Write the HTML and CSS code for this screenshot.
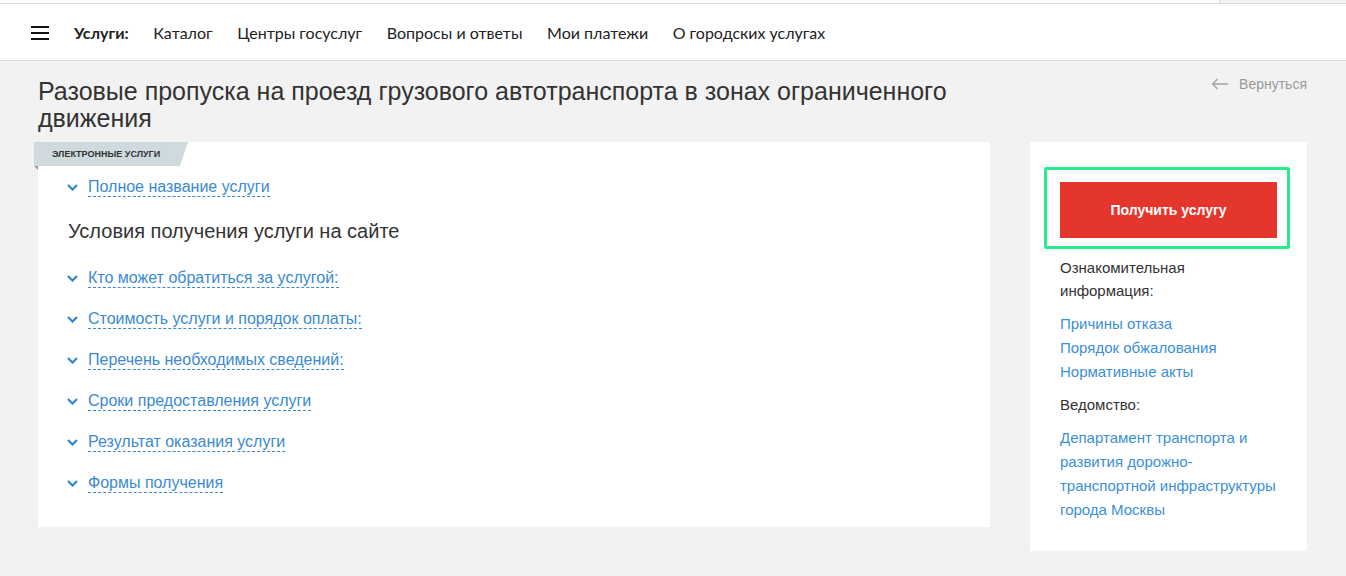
FILE: index.html
```html
<!DOCTYPE html>
<html lang="ru">
<head>
  <meta charset="utf-8">
  <title>Разовые пропуска на проезд грузового автотранспорта</title>
  <link rel="stylesheet" href="styles.css">
</head>
<body>
  <div class="topline">
    <div class="topline-side"></div>
  </div>

  <header class="header">
    <div class="burger">
      <span></span><span></span><span></span>
    </div>
    <nav class="nav">
      <b class="nav-title">Услуги:</b>
      <a href="#">Каталог</a>
      <a href="#">Центры госуслуг</a>
      <a href="#">Вопросы и ответы</a>
      <a href="#">Мои платежи</a>
      <a href="#">О городских услугах</a>
    </nav>
  </header>

  <main class="page">
    <div class="title-row">
      <h1>Разовые пропуска на проезд грузового автотранспорта в зонах ограниченного движения</h1>
      <a class="back" href="#">
        <svg width="18" height="12" viewBox="0 0 18 12"><path d="M17 6H1.5M6.5 1L1.5 6l5 5" fill="none" stroke="#a3a3a3" stroke-width="1.3"/></svg>
        Вернуться
      </a>
    </div>

    <div class="columns">
      <section class="card">
        <div class="tag"><span class="tag-label">Электронные услуги</span></div>
        <div class="card-body">
          <a class="toggle" href="#">
            <svg class="chevron" width="11" height="7" viewBox="0 0 11 7"><path d="M1 1l4.5 4.5L10 1" fill="none" stroke="#2f86cf" stroke-width="2.2"/></svg>
            <span class="toggle-text">Полное название услуги</span>
          </a>

          <h2>Условия получения услуги на сайте</h2>

          <div class="toggles">
            <a class="toggle" href="#">
              <svg class="chevron" width="11" height="7" viewBox="0 0 11 7"><path d="M1 1l4.5 4.5L10 1" fill="none" stroke="#2f86cf" stroke-width="2.2"/></svg>
              <span class="toggle-text">Кто может обратиться за услугой:</span>
            </a>
            <a class="toggle" href="#">
              <svg class="chevron" width="11" height="7" viewBox="0 0 11 7"><path d="M1 1l4.5 4.5L10 1" fill="none" stroke="#2f86cf" stroke-width="2.2"/></svg>
              <span class="toggle-text">Стоимость услуги и порядок оплаты:</span>
            </a>
            <a class="toggle" href="#">
              <svg class="chevron" width="11" height="7" viewBox="0 0 11 7"><path d="M1 1l4.5 4.5L10 1" fill="none" stroke="#2f86cf" stroke-width="2.2"/></svg>
              <span class="toggle-text">Перечень необходимых сведений:</span>
            </a>
            <a class="toggle" href="#">
              <svg class="chevron" width="11" height="7" viewBox="0 0 11 7"><path d="M1 1l4.5 4.5L10 1" fill="none" stroke="#2f86cf" stroke-width="2.2"/></svg>
              <span class="toggle-text">Сроки предоставления услуги</span>
            </a>
            <a class="toggle" href="#">
              <svg class="chevron" width="11" height="7" viewBox="0 0 11 7"><path d="M1 1l4.5 4.5L10 1" fill="none" stroke="#2f86cf" stroke-width="2.2"/></svg>
              <span class="toggle-text">Результат оказания услуги</span>
            </a>
            <a class="toggle" href="#">
              <svg class="chevron" width="11" height="7" viewBox="0 0 11 7"><path d="M1 1l4.5 4.5L10 1" fill="none" stroke="#2f86cf" stroke-width="2.2"/></svg>
              <span class="toggle-text">Формы получения</span>
            </a>
          </div>
        </div>
      </section>

      <aside class="side">
        <div class="focus-box">
          <a class="get-button" href="#">Получить услугу</a>
        </div>

        <p class="side-label">Ознакомительная информация:</p>
        <div class="side-links">
          <a href="#">Причины отказа</a>
          <a href="#">Порядок обжалования</a>
          <a href="#">Нормативные акты</a>
        </div>

        <p class="side-label side-label-single">Ведомство:</p>
        <div class="side-links">
          <a href="#">Департамент транспорта и развития дорожно-транспортной инфраструктуры города Москвы</a>
        </div>
      </aside>
    </div>
  </main>
</body>
</html>
```

FILE: styles.css
```css
body {
  margin: 0;
  background-color: #f2f2f2;
  font-family: "Liberation Sans", Arial, sans-serif;
  color: #333;
}
a {
  text-decoration: none;
}

/* Top strip */
.topline {
  height: 3px;
  background-color: #fff;
  border-bottom: 1px solid #dcdcdc;
  display: flex;
  justify-content: flex-end;
}
.topline-side {
  width: 126px;
  background-color: #f2f2f2;
  border-left: 1px solid #dcdcdc;
}

/* Header */
.header {
  height: 56px;
  background-color: #fff;
  border-bottom: 1px solid #dcdcdc;
  display: flex;
  align-items: center;
  padding-left: 31px;
  font-family: Lato, "Liberation Sans", sans-serif;
}
.burger {
  width: 18px;
  height: 14px;
  display: flex;
  flex-direction: column;
  justify-content: space-between;
  margin-top: 1px;
  margin-right: 25px;
}
.burger span {
  height: 2px;
  background-color: #111;
}
.nav {
  display: flex;
  align-items: center;
  gap: 24.6px;
  font-size: 16px;
}
.nav-title {
  font-weight: bold;
  color: #222;
}
.nav a {
  color: #222;
}

/* Page */
.page {
  padding: 0 39px 0 38px;
}
.title-row {
  display: flex;
  align-items: flex-start;
  justify-content: space-between;
  padding-top: 13px;
}
h1 {
  margin: 4px 0 0;
  width: 940px;
  font-size: 25px;
  line-height: 27px;
  font-weight: normal;
  color: #333;
}
.back {
  display: flex;
  align-items: center;
  gap: 10px;
  font-size: 14px;
  line-height: 20px;
  color: #9a9a9a;
}

.columns {
  display: flex;
  align-items: flex-start;
  justify-content: space-between;
  margin-top: 10px;
}

/* Main card */
.card {
  width: 952px;
  background-color: #fff;
}
.tag {
  position: relative;
  width: 154px;
  margin-left: -4px;
}
.tag-label {
  display: block;
  height: 24px;
  line-height: 24px;
  padding-left: 18px;
  background-color: #cfdadf;
  clip-path: polygon(0 0, 100% 0, calc(100% - 8px) 100%, 0 100%);
  font-size: 9px;
  font-weight: bold;
  text-transform: uppercase;
  color: #333;
}
.tag::after {
  content: "";
  position: absolute;
  top: 100%;
  left: 0;
  border-top: 4px solid #8f9ea5;
  border-left: 4px solid transparent;
}
.card-body {
  padding: 11px 30px 34px 29px;
}
.toggle {
  display: flex;
  align-items: center;
  height: 20px;
  font-size: 16px;
  color: #3a8ad2;
}
.chevron {
  flex-shrink: 0;
  margin-right: 10px;
}
.toggle-text {
  border-bottom: 1px dashed #3a8ad2;
  line-height: 19px;
}
h2 {
  margin: 22px 0 25px 1px;
  font-size: 20px;
  line-height: 24px;
  font-weight: normal;
  color: #333;
}
.toggles {
  display: flex;
  flex-direction: column;
  gap: 21px;
}

/* Sidebar */
.side {
  width: 277px;
  box-sizing: border-box;
  background-color: #fff;
  padding: 25px 30px 29px 30px;
  font-size: 15px;
}
.focus-box {
  margin: 0 -13px 0 -16px;
  border: 3px solid #26ec8b;
  border-radius: 2px;
  padding: 12px 10px 8px 13px;
}
.get-button {
  display: flex;
  align-items: center;
  justify-content: center;
  height: 56px;
  background-color: #e5362e;
  color: #fff;
  font-size: 14px;
  font-weight: bold;
}
.side-label {
  margin: 7px 0 10px;
  line-height: 23px;
  color: #333;
}
.side-label-single {
  margin-top: 9px;
  margin-bottom: 9px;
  line-height: 24px;
}
.side-links {
  display: flex;
  flex-direction: column;
  line-height: 24px;
}
.side-links a {
  color: #3b8fd8;
}
```
